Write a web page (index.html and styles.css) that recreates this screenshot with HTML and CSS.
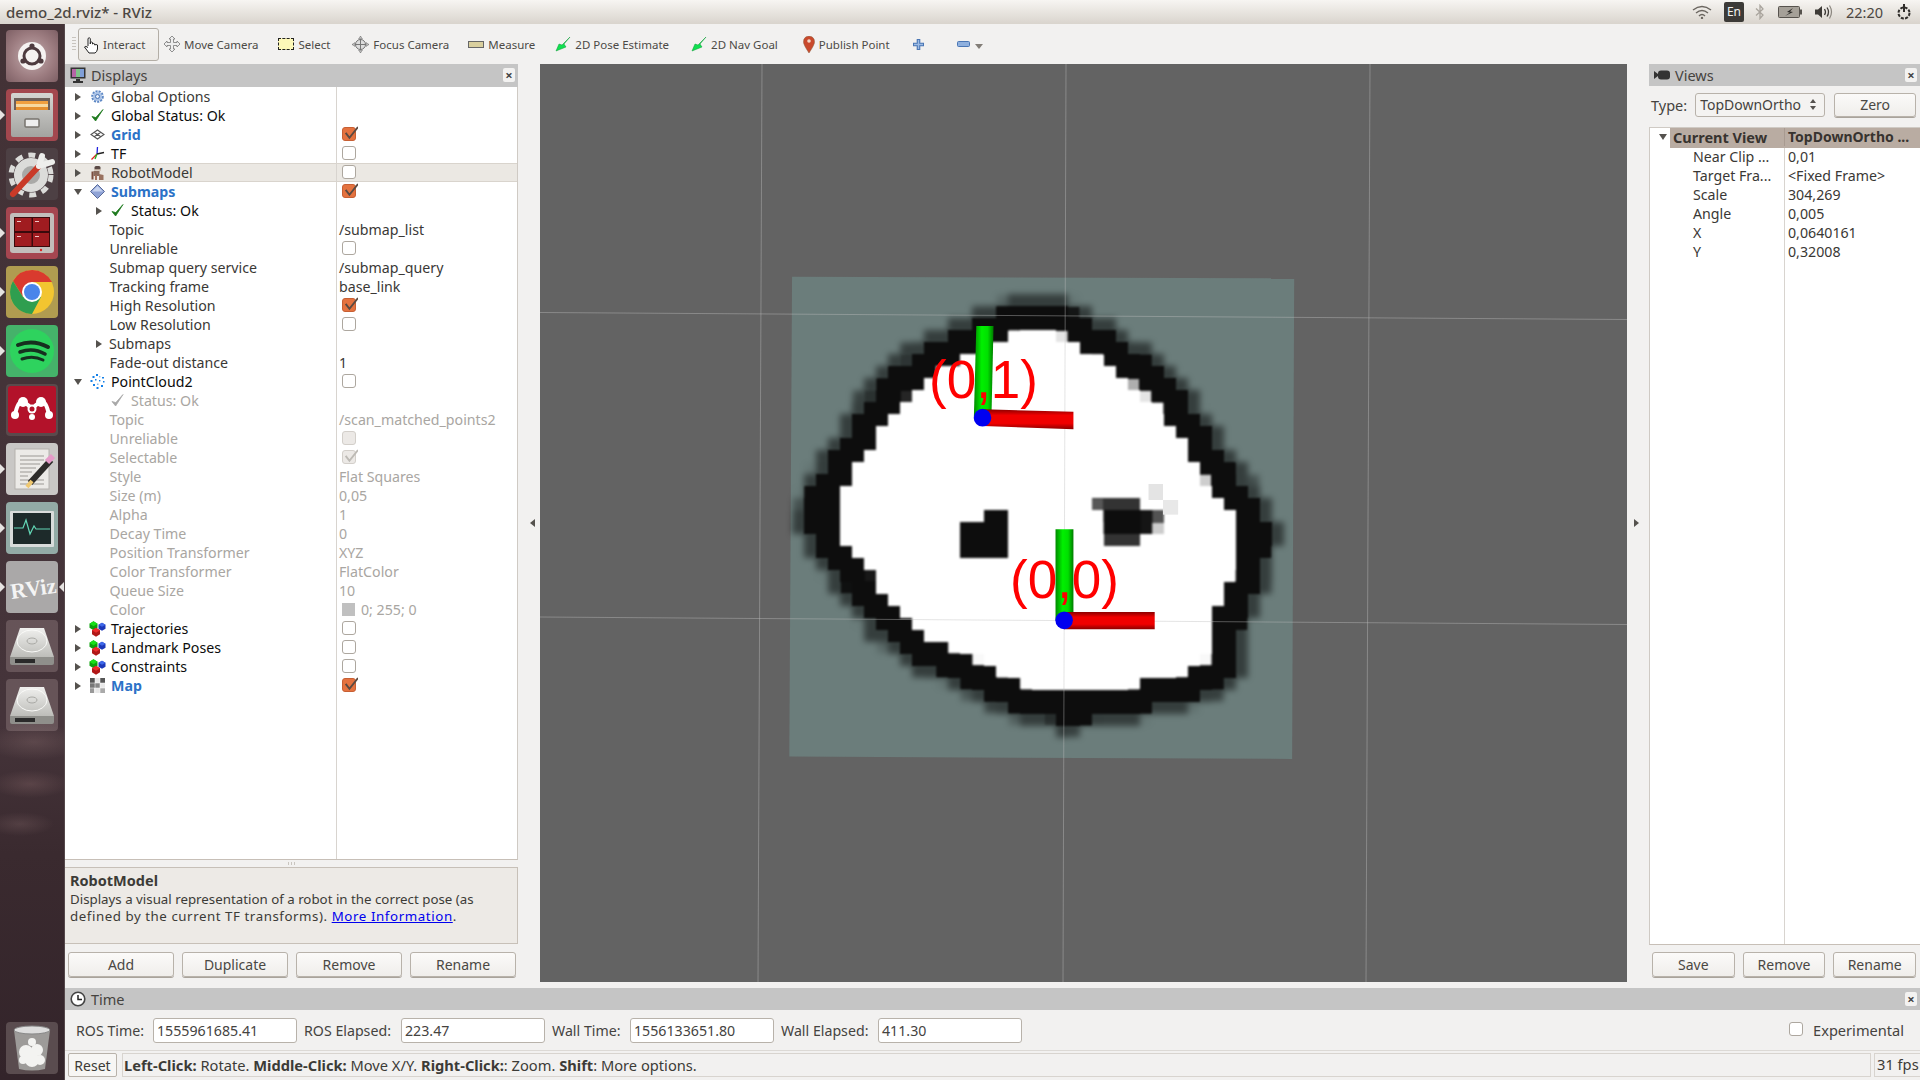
FILE: index.html
```
<!DOCTYPE html>
<html lang="en">
<head>
<meta charset="utf-8">
<title>demo_2d.rviz* - RViz</title>
<link rel="stylesheet" href="styles.css">
</head>
<body>
<svg class="defs" width="0" height="0" aria-hidden="true">
  <defs>
    <symbol id="i-gear" viewBox="0 0 15 15"><circle cx="7.5" cy="7.5" r="5" fill="none" stroke="#5b86c4" stroke-width="2.6" stroke-dasharray="2 1" /><circle cx="7.5" cy="7.5" r="4.6" fill="#a9c2e6" /><circle cx="7.5" cy="7.5" r="2" fill="#e8eef8" stroke="#4a75b5" /></symbol>
    <symbol id="i-check" viewBox="0 0 15 15"><path d="M2 8.5 L5.6 13 L13 1.5 L5.8 9.6 Z" fill="#1e7a1e" stroke="#1e7a1e" stroke-width=".8" stroke-linejoin="round"/></symbol>
    <symbol id="i-check-off" viewBox="0 0 15 15"><path d="M2 8.5 L5.6 13 L13 1.5 L5.8 9.6 Z" fill="#a8a8a8" stroke="#a8a8a8" stroke-width=".8" stroke-linejoin="round"/></symbol>
    <symbol id="i-grid" viewBox="0 0 15 15"><path d="M7.5 3 L14 7.5 L7.5 12 L1 7.5 Z M4.2 5.2 L10.8 9.8 M10.8 5.2 L4.2 9.8" fill="none" stroke="#555" stroke-width="1.1"/></symbol>
    <symbol id="i-tf" viewBox="0 0 15 15"><path d="M7 8 L7.5 1" stroke="#2323e0" stroke-width="1.3"/><path d="M7 8 L14 6.5" stroke="#222" stroke-width="1.3"/><path d="M7 8 L1.5 13.5" stroke="#e02020" stroke-width="1.3"/><path d="M7 8 L5 13" stroke="#20b020" stroke-width="1.3"/></symbol>
    <symbol id="i-robot" viewBox="0 0 15 15"><rect x="4.5" y="1" width="6" height="4" rx="1.5" fill="#5b4a46"/><rect x="4" y="4.2" width="7" height="1.4" fill="#c9b7a8"/><rect x="3.5" y="6" width="6" height="5" fill="#8a6a5c"/><rect x="1.5" y="6.5" width="2" height="8" fill="#7a4d3e"/><rect x="5" y="10" width="2" height="5" fill="#a2705c"/><path d="M9 9 L13.5 10 L13.5 15 L9 15 Z" fill="#9a7260"/></symbol>
    <symbol id="i-diamond" viewBox="0 0 15 15"><path d="M7.5 0.5 L14.5 7.5 L7.5 14.5 L0.5 7.5 Z" fill="#8fa3d6" stroke="#5a6b99"/><path d="M7.5 2 L13 7.5 L2 7.5 Z" fill="#c7d3ef"/></symbol>
    <symbol id="i-cloud" viewBox="0 0 15 15"><g fill="#1480e8"><rect x="6" y="0" width="2" height="2"/><rect x="2.5" y="2" width="2" height="2"/><rect x="9" y="2" width="1.4" height="1.4" fill="#7cb8f0"/><rect x="12" y="3" width="2" height="1.5"/><rect x="0.5" y="6" width="2" height="2"/><rect x="5" y="5" width="1.5" height="1.5"/><rect x="9" y="6" width="1.4" height="1.4"/><rect x="13" y="7" width="1.5" height="1.5"/><rect x="3" y="10" width="2" height="2"/><rect x="7" y="9.5" width="1.5" height="1.5" fill="#7cb8f0"/><rect x="11" y="11" width="2" height="2"/><rect x="6.5" y="13" width="2" height="2"/></g></symbol>
    <symbol id="i-cubes" viewBox="0 0 17 15.5"><path d="M4.5 0 L8.5 2.5 L8.5 6.5 L4.5 9 L.5 6.5 L.5 2.5 Z" fill="#0ca00c"/><path d="M4.5 0 L8.5 2.5 L4.5 5 L.5 2.5 Z" fill="#18e018"/><path d="M13 1.5 L16.5 3.5 L16.5 7.5 L13 9.5 L9.5 7.5 L9.5 3.5 Z" fill="#1c38b8"/><path d="M13 1.5 L16.5 3.5 L13 5.5 L9.5 3.5 Z" fill="#3f68ea"/><path d="M7 6.5 L11 9 L11 13 L7 15.5 L3 13 L3 9 Z" fill="#b01818"/><path d="M7 6.5 L11 9 L7 11.5 L3 9 Z" fill="#ee2c2c"/></symbol>
    <symbol id="i-map" viewBox="0 0 15 15"><rect width="15" height="15" fill="#e8e8e8"/><g fill="#555"><rect width="5" height="5"/><rect x="5" y="5" width="5" height="5" fill="#888"/><rect y="5" width="5" height="5" fill="#777"/><rect y="10" width="4" height="5" fill="#999"/><rect x="10" width="5" height="5"/><rect x="10" y="10" width="5" height="5" fill="#aaa"/></g><path d="M5 0V15M10 0V15M0 5H15M0 10H15" stroke="#fff" stroke-width=".5"/></symbol>
    <symbol id="i-tick" viewBox="0 0 14 14"><path d="M2.5 6.5 L6 11 L14 1" fill="none" stroke="#5a4a42" stroke-width="1.8"/></symbol>
    <symbol id="i-tick-off" viewBox="0 0 14 14"><path d="M2.5 6.5 L6 11 L14 1" fill="none" stroke="#bdbab5" stroke-width="1.8"/></symbol>
    <symbol id="i-arrow2d" viewBox="0 0 16 16"><path d="M1 15 L4 8 L7 9 L15 1 L9 8 L11 11 Z" fill="#10e050" stroke="#0a9a34" stroke-width=".5"/></symbol>
    <linearGradient id="g-disk" x2="0" y2="1"><stop offset="0" stop-color="#f0f0ee"/><stop offset="1" stop-color="#bdbdb9"/></linearGradient>
    <linearGradient id="g-cab" x2="0" y2="1"><stop offset="0" stop-color="#d5d5d2"/><stop offset="1" stop-color="#a3a3a0"/></linearGradient>
    <symbol id="i-disk" viewBox="0 0 52 52"><path d="M14 8 L38 8 L48 37 L4 37 Z" fill="url(#g-disk)"/><ellipse cx="26" cy="21" rx="15" ry="11" fill="none" stroke="#fafaf8"/><ellipse cx="26" cy="21" rx="5" ry="3" fill="none" stroke="#a9a9a5"/><path d="M4 37 H48 V43 Q48 45 46 45 H6 Q4 45 4 43 Z" fill="#8f8f8b"/><rect x="9" y="39" width="20" height="4" fill="#2a2a2a"/></symbol>
  </defs>
</svg>

<header class="topbar">
  <div class="win-title">demo_2d.rviz* - RViz</div>
  <div class="tray">
    <svg class="tray-wifi" viewBox="0 0 20 14" width="20" height="14"><path d="M1 5 Q10 -2 19 5 M4 8 Q10 3 16 8 M7 11 Q10 8 13 11" fill="none" stroke="#6a655f" stroke-width="1.4"/><circle cx="10" cy="13" r="1.2" fill="#6a655f"/></svg>
    <span class="tray-lang">En</span>
    <svg class="tray-bt" viewBox="0 0 10 16" width="10" height="16"><path d="M1 4.5 L8 11 L5 14.5 V1.5 L8 5 L1 11.5" fill="none" stroke="#a9a49d" stroke-width="1.3"/></svg>
    <svg class="tray-bat" viewBox="0 0 24 12" width="24" height="12"><rect x=".5" y=".5" width="21" height="11" rx="1" fill="#a5a098" stroke="#56524d"/><rect x="22" y="3.5" width="2" height="5" fill="#56524d"/><path d="M15 2 L9 6 L12 6.5 L7 10 L15 6 L12 5.5 Z" fill="#2b2926"/></svg>
    <svg class="tray-vol" viewBox="0 0 20 16" width="20" height="16"><path d="M1 5.5 H4 L8 2 V14 L4 10.500 H1 Z" fill="#3d3a36"/><path d="M10.500 5 Q12.500 8 10.500 11 M13 3.500 Q16 8 13 12.500" fill="none" stroke="#3d3a36" stroke-width="1.3"/><path d="M15.500 1.500 Q19.500 8 15.500 14.500" fill="none" stroke="#8b867f" stroke-width="1.2"/></svg>
    <span class="tray-clock">22:20</span>
    <svg class="tray-power" viewBox="0 0 16 16" width="16" height="16"><circle cx="8" cy="9" r="5.5" fill="none" stroke="#2f2c29" stroke-width="2" stroke-dasharray="3 1.300"/><path d="M8 0 V8" stroke="#2f2c29" stroke-width="2"/></svg>
  </div>
</header>

<div class="desktop">
  <nav class="launcher">
    <div class="tile t-dash"><svg viewBox="0 0 52 52"><circle cx="26" cy="26" r="14" fill="#f5f2f1"/><circle cx="26" cy="26" r="8" fill="none" stroke="#4e3b3f" stroke-width="3"/><circle cx="26" cy="16" r="2.600" fill="#4e3b3f"/><circle cx="17" cy="31" r="2.600" fill="#4e3b3f"/><circle cx="35" cy="31" r="2.600" fill="#4e3b3f"/></svg></div>
    <div class="tile t-files run"><svg viewBox="0 0 52 52"><rect x="5" y="4" width="42" height="44" rx="2" fill="url(#g-cab)"/><rect x="8" y="9" width="36" height="12" fill="#6d605a"/><rect x="10" y="12" width="32" height="3" fill="#f0a040"/><rect x="10" y="15" width="32" height="3" fill="#f7d9a0"/><rect x="10" y="18" width="32" height="3" fill="#e59030"/><rect x="19" y="30" width="14" height="8" rx="1" fill="#eee" stroke="#77736e" stroke-width="1.500"/></svg></div>
    <div class="tile t-settings"><svg viewBox="0 0 52 52"><circle cx="25" cy="27" r="20" fill="none" stroke="#dcdcda" stroke-width="5" stroke-dasharray="7 6"/><circle cx="25" cy="27" r="13" fill="#a9a9a7" stroke="#dcdcda" stroke-width="8"/><path d="M7 46 L33 18" stroke="#c93a28" stroke-width="6" stroke-linecap="round"/><path d="M33 18 L36 8 M33 18 L46 14" stroke="#eeeeec" stroke-width="6" stroke-linecap="round"/></svg></div>
    <div class="tile t-work run"><svg viewBox="0 0 52 52"><rect x="4" y="6" width="44" height="40" rx="3" fill="#c2bebb"/><rect x="8" y="10" width="36" height="30" fill="#3a0a0c"/><g fill="#a01c20"><rect x="9" y="11" width="16.500" height="13"/><rect x="27" y="11" width="16" height="13"/><rect x="9" y="26" width="16.500" height="13"/><rect x="27" y="26" width="16" height="13"/></g><g fill="#f0c8c8"><rect x="11" y="14" width="4" height="1"/><rect x="29" y="14" width="4" height="1"/><rect x="11" y="29" width="4" height="1"/><rect x="29" y="29" width="4" height="1"/></g><circle cx="35" cy="43" r="1.200" fill="#d22"/></svg></div>
    <div class="tile t-chrome run"><svg viewBox="0 0 52 52"><circle cx="26" cy="26" r="22" fill="#f2c530"/><path d="M26 4 A22 22 0 0 0 7 15 L17 31 L26 16 L46 16 A22 22 0 0 0 26 4 Z" fill="#d93a2e"/><path d="M7 15 A22 22 0 0 0 26 48 L35 31 L17 31 Z" fill="#2f9e4f"/><circle cx="26" cy="26" r="10" fill="#fff"/><circle cx="26" cy="26" r="8" fill="#4a85ea"/></svg></div>
    <div class="tile t-spotify run"><svg viewBox="0 0 52 52"><circle cx="26" cy="26" r="22" fill="#2ed35e"/><g fill="none" stroke="#16301f" stroke-linecap="round"><path d="M12 20 Q27 14 42 22" stroke-width="4"/><path d="M14 27 Q27 22 39 29" stroke-width="3.500"/><path d="M16 34 Q27 30 37 35" stroke-width="3"/></g></svg></div>
    <div class="tile t-mendeley"><svg viewBox="0 0 52 52"><rect x="2" y="2" width="48" height="47" rx="3" fill="#b3122a"/><g fill="#fff"><circle cx="26" cy="25" r="4.500"/><circle cx="17" cy="18" r="5"/><circle cx="35" cy="18" r="5"/><circle cx="9" cy="31" r="4"/><circle cx="43" cy="31" r="4"/><circle cx="26" cy="33" r="3"/></g><path d="M9 31 Q12 16 17 18 Q22 20 26 25 Q30 20 35 18 Q40 16 43 31" fill="none" stroke="#fff" stroke-width="4"/><circle cx="26" cy="25" r="2.500" fill="#b3122a"/></svg></div>
    <div class="tile t-editor run"><svg viewBox="0 0 52 52"><rect x="9" y="6" width="34" height="40" fill="#eceae7" stroke="#b5b2ae"/><g stroke="#9b9894"><path d="M14 13H38M14 17H38M14 21H34M14 25H30M14 29H26M14 33H22M14 37H38M14 41H38"/></g><path d="M24 40 L45 17" stroke="#2e2c2a" stroke-width="6"/><path d="M41 19 L47 13" stroke="#e59ac8" stroke-width="6"/><path d="M21 44 L26 38" stroke="#f0c870" stroke-width="4"/></svg></div>
    <div class="tile t-monitor run"><svg viewBox="0 0 52 52"><rect x="4" y="9" width="44" height="36" rx="1" fill="#d9dcdb"/><rect x="7" y="11" width="38" height="31" fill="#1d2a2a"/><path d="M8 26 H17 L20 18 L24 32 L28 24 L30 27 H44" fill="none" stroke="#62d6b5" stroke-width="1.200"/></svg></div>
    <div class="tile t-rviz run-both"><svg viewBox="0 0 52 52"><text class="rviz-logo" x="4" y="35" transform="rotate(-8 26 26)">RViz</text></svg></div>
    <div class="tile t-disk"><svg viewBox="0 0 52 52"><use href="#i-disk"/></svg></div>
    <div class="tile t-disk"><svg viewBox="0 0 52 52"><use href="#i-disk"/></svg></div>
    <div class="tile t-trash"><svg viewBox="0 0 52 52"><path d="M8 8 Q26 2 44 8 L39 47 Q26 50 13 47 Z" fill="#9d9b99"/><ellipse cx="26" cy="8" rx="18" ry="4" fill="#ddd" stroke="#888"/><g fill="#f3f3f1"><circle cx="20" cy="30" r="7"/><circle cx="31" cy="28" r="6"/><circle cx="26" cy="38" r="7"/><circle cx="17" cy="38" r="4"/><circle cx="34" cy="38" r="5"/><circle cx="26" cy="20" r="4"/></g></svg></div>
  </nav>

  <div class="app">
    <div class="toolbar">
      <span class="grip"></span>
      <button class="tool tool-on"><svg viewBox="0 0 16 18" width="16" height="18"><path d="M5 10 V2.500 Q6.200 1 7.300 2.500 V8 V6.500 Q8.500 5.500 9.500 6.500 V8 Q10.700 7 11.700 8 V9 Q13 8 14.500 9 V13 Q14 16 12 17 H6 L1.500 11 Q2.500 9.500 5 11.500" fill="#fff" stroke="#222" stroke-width="1"/></svg>Interact</button>
      <button class="tool t-move"><svg viewBox="0 0 16 16" width="16" height="16"><path d="M8 0 L11 3 H9.500 V6.500 H13 V5 L16 8 L13 11 V9.500 H9.500 V13 H11 L8 16 L5 13 H6.500 V9.500 H3 V11 L0 8 L3 5 V6.500 H6.500 V3 H5 Z" fill="#eee" stroke="#777" stroke-width=".8"/></svg>Move Camera</button>
      <button class="tool"><span class="sel-box"></span>Select</button>
      <button class="tool t-focus"><svg viewBox="0 0 17 17" width="17" height="17"><circle cx="8.500" cy="8.500" r="5" fill="#ddd" stroke="#777"/><path d="M8.500 0 V17 M0 8.500 H17" stroke="#777"/><path d="M8.500 0 L6.500 3 H10.500 Z M8.500 17 L6.500 14 H10.500 Z M0 8.500 L3 6.500 V10.500 Z M17 8.500 L14 6.500 V10.500 Z" fill="#bbb" stroke="#777" stroke-width=".5"/></svg>Focus Camera</button>
      <button class="tool t-measure"><span class="ruler"></span>Measure</button>
      <button class="tool"><svg viewBox="0 0 16 16" width="16" height="16"><use href="#i-arrow2d"/></svg>2D Pose Estimate</button>
      <button class="tool t-nav"><svg viewBox="0 0 16 16" width="16" height="16"><use href="#i-arrow2d"/></svg>2D Nav Goal</button>
      <button class="tool t-pub"><svg viewBox="0 0 12 17" width="12" height="17"><path d="M6 17 Q0 8 .5 5.500 A5.500 5.500 0 0 1 11.500 5.500 Q12 8 6 17 Z" fill="#c9492c" stroke="#8a5a3a" stroke-width=".5"/><circle cx="6" cy="5" r="1.800" fill="#f4d8c8"/></svg>Publish Point</button>
      <svg class="t-plus" viewBox="0 0 13 13" width="13" height="13"><path d="M6.500 1 V12 M1 6.500 H12" stroke="#4a76b4" stroke-width="3.600"/><path d="M6.500 2 V11 M2 6.500 H11" stroke="#9dbbe4" stroke-width="1.400"/></svg>
      <svg class="t-minus" viewBox="0 0 13 6" width="13" height="6"><rect x=".5" y=".5" width="12" height="5" rx="1" fill="#8fb0de" stroke="#4a76b4"/></svg>
      <span class="t-caret"></span>
    </div>

    <div class="work">
      <section class="panel displays">
        <div class="dock-title">
          <svg viewBox="0 0 16 16" width="16" height="16"><rect x=".5" y="0.500" width="15" height="11" fill="#333"/><rect x="2" y="2" width="4" height="8" fill="#b565a6"/><rect x="6" y="2" width="4" height="8" fill="#7fc48a"/><rect x="10" y="2" width="4" height="8" fill="#7f9fd8"/><rect x="6" y="12" width="4" height="2" fill="#333"/><rect x="3" y="14" width="10" height="2" fill="#333"/></svg>
          <span>Displays</span><span class="dock-x">×</span>
        </div>
        <div class="tree">
          <div class="row"><div class="name l0"><i class="tri r"></i><svg class="ico"><use href="#i-gear"/></svg>Global Options</div><div class="val"></div></div>
          <div class="row"><div class="name l0 blk"><i class="tri r"></i><svg class="ico"><use href="#i-check"/></svg>Global Status: Ok</div><div class="val"></div></div>
          <div class="row"><div class="name l0 act"><i class="tri r"></i><svg class="ico"><use href="#i-grid"/></svg>Grid</div><div class="val"><span class="cb on"><svg><use href="#i-tick"/></svg></span></div></div>
          <div class="row"><div class="name l0 blk"><i class="tri r"></i><svg class="ico"><use href="#i-tf"/></svg>TF</div><div class="val"><span class="cb"></span></div></div>
          <div class="row sel"><div class="name l0"><i class="tri r"></i><svg class="ico"><use href="#i-robot"/></svg>RobotModel</div><div class="val"><span class="cb"></span></div></div>
          <div class="row"><div class="name l0 act"><i class="tri d"></i><svg class="ico"><use href="#i-diamond"/></svg>Submaps</div><div class="val"><span class="cb on"><svg><use href="#i-tick"/></svg></span></div></div>
          <div class="row"><div class="name l1a blk"><i class="tri r"></i><svg class="ico"><use href="#i-check"/></svg>Status: Ok</div><div class="val"></div></div>
          <div class="row"><div class="name l1">Topic</div><div class="val">/submap_list</div></div>
          <div class="row"><div class="name l1">Unreliable</div><div class="val"><span class="cb"></span></div></div>
          <div class="row"><div class="name l1">Submap query service</div><div class="val">/submap_query</div></div>
          <div class="row"><div class="name l1">Tracking frame</div><div class="val">base_link</div></div>
          <div class="row"><div class="name l1">High Resolution</div><div class="val"><span class="cb on"><svg><use href="#i-tick"/></svg></span></div></div>
          <div class="row"><div class="name l1">Low Resolution</div><div class="val"><span class="cb"></span></div></div>
          <div class="row"><div class="name l1a"><i class="tri r tight"></i>Submaps</div><div class="val"></div></div>
          <div class="row"><div class="name l1">Fade-out distance</div><div class="val">1</div></div>
          <div class="row"><div class="name l0 blk"><i class="tri d"></i><svg class="ico"><use href="#i-cloud"/></svg>PointCloud2</div><div class="val"><span class="cb"></span></div></div>
          <div class="row off"><div class="name l1s"><svg class="ico"><use href="#i-check-off"/></svg>Status: Ok</div><div class="val"></div></div>
          <div class="row off"><div class="name l1">Topic</div><div class="val">/scan_matched_points2</div></div>
          <div class="row off"><div class="name l1">Unreliable</div><div class="val"><span class="cb dis"></span></div></div>
          <div class="row off"><div class="name l1">Selectable</div><div class="val"><span class="cb dis"><svg><use href="#i-tick-off"/></svg></span></div></div>
          <div class="row off"><div class="name l1">Style</div><div class="val">Flat Squares</div></div>
          <div class="row off"><div class="name l1">Size (m)</div><div class="val">0,05</div></div>
          <div class="row off"><div class="name l1">Alpha</div><div class="val">1</div></div>
          <div class="row off"><div class="name l1">Decay Time</div><div class="val">0</div></div>
          <div class="row off"><div class="name l1">Position Transformer</div><div class="val">XYZ</div></div>
          <div class="row off"><div class="name l1">Color Transformer</div><div class="val">FlatColor</div></div>
          <div class="row off"><div class="name l1">Queue Size</div><div class="val">10</div></div>
          <div class="row off"><div class="name l1">Color</div><div class="val"><span class="swatch"></span>0; 255; 0</div></div>
          <div class="row"><div class="name l0 blk"><i class="tri r"></i><svg class="ico ico-w"><use href="#i-cubes"/></svg>Trajectories</div><div class="val"><span class="cb"></span></div></div>
          <div class="row"><div class="name l0 blk"><i class="tri r"></i><svg class="ico ico-w"><use href="#i-cubes"/></svg>Landmark Poses</div><div class="val"><span class="cb"></span></div></div>
          <div class="row"><div class="name l0 blk"><i class="tri r"></i><svg class="ico ico-w"><use href="#i-cubes"/></svg>Constraints</div><div class="val"><span class="cb"></span></div></div>
          <div class="row"><div class="name l0 act"><i class="tri r"></i><svg class="ico"><use href="#i-map"/></svg>Map</div><div class="val"><span class="cb on"><svg><use href="#i-tick"/></svg></span></div></div>
          <div class="row filler"><div class="name"></div><div class="val"></div></div>
        </div>
        <div class="handle"></div>
        <div class="desc">
          <b>RobotModel</b><br>
          Displays a visual representation of a robot in the correct pose (as<br>
          <span class="line2">defined by the current TF transforms). <a href="#">More Information</a>.</span>
        </div>
        <div class="btn-row disp-btns">
          <button class="btn">Add</button><button class="btn">Duplicate</button><button class="btn">Remove</button><button class="btn">Rename</button>
        </div>
      </section>

      <div class="split"><i class="tri-l"></i></div>

      <main class="viewport">
        <svg class="scene" viewBox="540 64 1087 918" width="1087" height="918">
          <defs>
            <filter id="pixel" filterUnits="userSpaceOnUse" x="780" y="270" width="560" height="510" color-interpolation-filters="sRGB">
              <feFlood x="785" y="275" width="2" height="2"/>
              <feComposite width="12" height="12"/>
              <feTile result="dots"/>
              <feComposite in="SourceGraphic" in2="dots" operator="in"/>
              <feMorphology operator="dilate" radius="5"/>
              <feGaussianBlur stdDeviation="1.300"/>
            </filter>
            <filter id="pixelSoft" filterUnits="userSpaceOnUse" x="780" y="270" width="560" height="510" color-interpolation-filters="sRGB">
              <feFlood x="785" y="275" width="2" height="2"/>
              <feComposite width="12" height="12"/>
              <feTile result="dots"/>
              <feComposite in="SourceGraphic" in2="dots" operator="in"/>
              <feMorphology operator="dilate" radius="5"/>
              <feGaussianBlur stdDeviation="3"/>
            </filter>
            <linearGradient id="gGreen"><stop offset="0" stop-color="#008a00"/><stop offset=".4" stop-color="#00f000"/><stop offset=".7" stop-color="#00e000"/><stop offset="1" stop-color="#007a00"/></linearGradient>
            <linearGradient id="gRed" x2="0" y2="1"><stop offset="0" stop-color="#8a0000"/><stop offset=".3" stop-color="#f00000"/><stop offset=".7" stop-color="#f00000"/><stop offset="1" stop-color="#8a0000"/></linearGradient>
            <polygon id="outline" points="730,135 650,165 580,200 500,235 420,280 350,340 290,410 240,495 180,585 125,670 120,770 170,860 240,950 300,1040 400,1130 510,1180 620,1240 720,1290 830,1318 980,1300 1090,1265 1200,1240 1280,1190 1305,1040 1350,920 1385,790 1340,700 1270,610 1200,490 1130,390 1050,310 960,245 860,175 790,140"/>
          </defs>
          <g transform="translate(780 270) scale(.3444 .3333)">
            <polygon class="map-bg" points="35,20 1493,25 1487,1467 27,1460"/>
          </g>
          <g filter="url(#pixelSoft)">
            <g transform="translate(780 270) scale(.3444 .3333)">
              <use href="#outline" class="map-halo"/>
            </g>
          </g>
          <g filter="url(#pixel)">
            <g transform="translate(780 270) scale(.3444 .3333)">
              <use href="#outline" class="map-wall"/>
              <polygon class="map-blob" points="580,725 660,725 665,860 535,855 530,770 575,760"/>
              <polygon class="map-blob-soft" points="920,695 1060,695 1060,730 1100,735 1100,775 1060,780 1060,825 935,825"/>
              <polygon class="map-blob" points="925,725 1065,725 1065,780 925,780"/>
            </g>
          </g>
          <g transform="translate(780 270) scale(.3444 .3333)">
            <rect x="1070" y="642" width="42" height="48" fill="#e4e4e4"/>
            <rect x="1112" y="690" width="44" height="44" fill="#e8e8e8"/>
          </g>
          <g class="grid-lines">
            <line x1="762" y1="64" x2="758" y2="982"/>
            <line x1="1066" y1="64" x2="1063" y2="982"/>
            <line x1="1370" y1="64" x2="1366" y2="982"/>
            <line x1="540" y1="312.500" x2="1627" y2="319.500"/>
            <line x1="540" y1="617" x2="1627" y2="624.500"/>
          </g>
          <g transform="translate(780 270) scale(.3444 .3333)">
            <polygon fill="url(#gGreen)" points="570,168 620,168 614,440 563,440"/>
            <polygon fill="url(#gGreen)" points="800,778 852,778 852,1050 800,1050"/>
            <polygon fill="url(#gRed)" points="590,418 852,425 852,478 590,468"/>
            <polygon fill="url(#gRed)" points="825,1026 1088,1026 1088,1078 825,1078"/>
            <ellipse cx="588" cy="443" rx="25.500" ry="26.500" fill="#0000f0"/>
            <ellipse cx="825" cy="1051" rx="25.500" ry="26.500" fill="#0000f0"/>
          </g>
          <text class="marker" x="929" y="398">(0,1)</text>
          <text class="marker" x="1010" y="598">(0,0)</text>
        </svg>
      </main>

      <div class="split right"><i class="tri-r"></i></div>

      <aside class="panel views">
        <div class="dock-title">
          <svg viewBox="0 0 16 10" width="16" height="10"><path d="M0 1 L4 4 V6 L0 9 Z" fill="#333"/><rect x="4" y="0.500" width="12" height="9" rx="3" fill="#333"/></svg>
          <span>Views</span><span class="dock-x">×</span>
        </div>
        <div class="type-row">
          <label>Type:</label>
          <div class="combo">TopDownOrtho<span class="spin"><i></i><i></i></span></div>
          <button class="btn zero">Zero</button>
        </div>
        <div class="vtree">
          <div class="vhead"><i class="tri d"></i><div class="vn">Current View</div><div class="vv">TopDownOrtho ...</div></div>
          <div class="vrow"><div class="vn">Near Clip ...</div><div class="vv">0,01</div></div>
          <div class="vrow"><div class="vn">Target Fra...</div><div class="vv">&lt;Fixed Frame&gt;</div></div>
          <div class="vrow"><div class="vn">Scale</div><div class="vv">304,269</div></div>
          <div class="vrow"><div class="vn">Angle</div><div class="vv">0,005</div></div>
          <div class="vrow"><div class="vn">X</div><div class="vv">0,0640161</div></div>
          <div class="vrow"><div class="vn">Y</div><div class="vv">0,32008</div></div>
          <div class="vrow vfill"><div class="vn"></div><div class="vv"></div></div>
        </div>
        <div class="btn-row view-btns">
          <button class="btn">Save</button><button class="btn">Remove</button><button class="btn">Rename</button>
        </div>
      </aside>
    </div>

    <section class="time">
      <div class="dock-title">
        <svg viewBox="0 0 16 16" width="16" height="16"><circle cx="8" cy="8" r="6.800" fill="#fff" stroke="#444" stroke-width="1.600"/><path d="M8 4 V8.500 H12" fill="none" stroke="#222" stroke-width="1.500"/></svg>
        <span>Time</span><span class="dock-x">×</span>
      </div>
      <div class="time-row">
        <label>ROS Time:</label><div class="field">1555961685.41</div>
        <label class="pad">ROS Elapsed:</label><div class="field">223.47</div>
        <label class="pad">Wall Time:</label><div class="field">1556133651.80</div>
        <label class="pad">Wall Elapsed:</label><div class="field">411.30</div>
        <div class="exp"><span class="cb"></span>Experimental</div>
      </div>
    </section>

    <footer class="status">
      <button class="reset">Reset</button>
      <div class="hint"><b>Left-Click:</b> Rotate. <b>Middle-Click:</b> Move X/Y. <b>Right-Click:</b>: Zoom. <b>Shift</b>: More options.</div>
      <div class="fps">31 fps</div>
    </footer>
  </div>
</div>
</body>
</html>
```

FILE: styles.css
```
* { box-sizing: border-box; }
html, body { margin: 0; height: 1080px; width: 1920px; overflow: hidden; }
body { font-family: "Noto Sans", "Open Sans", sans-serif; font-size: 14.200px; color: #3c3b37; background: #f2f1f0; }
.defs { position: absolute; }
button { font: inherit; color: inherit; }

.topbar { height: 24px; display: flex; align-items: center; justify-content: space-between; background: linear-gradient(#f7f5f2, #d9d4cd); color: #4c4742; }
.win-title { padding-left: 6px; font-size: 15px; font-weight: 500; }
.tray { display: flex; align-items: center; }
.tray-wifi { margin-right: 12px; }
.tray-lang { width: 20px; height: 20px; margin-right: 11px; background: #3c3a37; color: #f2f1f0; border-radius: 2px; font-size: 12px; text-align: center; line-height: 20px; }
.tray-bt { margin-right: 13px; }
.tray-bat { margin-right: 12px; }
.tray-vol { margin-right: 12px; }
.tray-clock { font-size: 14.500px; margin-right: 13px; }
.tray-power { margin-right: 8px; }

.desktop { display: flex; height: 1056px; }
.launcher { width: 65px; flex: none; padding: 6px 0 6px 6px; display: flex; flex-direction: column; gap: 7px;
  background:
    radial-gradient(ellipse 40px 14px at 30px 760px, rgba(150,115,115,.3), transparent),
    radial-gradient(ellipse 34px 12px at 20px 800px, rgba(150,120,120,.25), transparent),
    radial-gradient(ellipse 50px 18px at 34px 718px, rgba(150,120,120,.3), transparent),
    linear-gradient(#433236 0, #45343a 700px, #3a2a2f 830px, #33242a 1056px);
  border-right: 1px solid #55484b; }
.tile { width: 52px; height: 52px; border-radius: 4px; position: relative; flex: none; }
.tile > svg { width: 52px; height: 52px; display: block; }
.run::before, .run-both::before { content: ""; position: absolute; left: -6px; top: 21px; border: 5px solid transparent; border-left-color: #e6e3e1; border-right-width: 0; }
.run-both::after { content: ""; position: absolute; right: -6px; top: 21px; border: 5px solid transparent; border-right-color: #e6e3e1; border-left-width: 0; }
.t-dash { background: radial-gradient(circle at 50% 50%, #c6aeb0 0, #9c7c80 60%, #7d5f64 100%); }
.t-files { background: #a3474e; }
.t-settings { background: #4d4044; }
.t-work { background: #a54650; }
.t-chrome { background: #b09c50; }
.t-spotify { background: #45b26a; }
.t-mendeley { background: #5a4a4c; }
.t-editor { background: #c9c7c5; }
.t-monitor { background: #93aba6; }
.t-rviz { background: #aaa8a8; }
.t-disk { background: rgba(190,170,170,.28); }
.t-trash { background: #5a4c4f; margin-top: auto; }
.rviz-logo { font-family: "Liberation Serif", serif; font-size: 22px; font-weight: 700; fill: #f4f4f4; }

.app { flex: 1; min-width: 0; display: flex; flex-direction: column; background: #f2f1f0; }

.toolbar { height: 40px; display: flex; align-items: center; padding-left: 7px; flex: none; }
.grip { width: 4px; height: 14px; margin-right: 2px; background: repeating-linear-gradient(#c8c4be 0 1px, transparent 1px 3px); }
.tool { height: 32px; border: 0; background: none; display: flex; align-items: center; gap: 4px; padding: 0; margin-left: 20px; font-size: 11.500px; white-space: nowrap; color: #4c4a46; }
.tool-on { width: 81px; height: 33px; margin-top: 1px; margin-left: 0; background: linear-gradient(#f4f3f1, #ece9e5); border: 1px solid #b3aea6; border-radius: 3px; padding-left: 4px; }
.t-move { margin-left: 5px; }
.t-focus { margin-left: 22px; }
.t-measure { margin-left: 19px; }
.t-nav { margin-left: 22px; }
.t-pub { margin-left: 25px; }
.sel-box { width: 16px; height: 12px; background: #fdf8b8; border: 1px dashed #222; }
.ruler { width: 16px; height: 7px; background: #d9cf9e; border: 1px solid #666; }
.t-plus { margin-left: 22px; }
.t-minus { margin-left: 32px; }
.t-caret { margin-left: 5px; margin-top: 5px; border: 4px solid transparent; border-top: 5px solid #827d77; border-bottom: 0; }

.work { height: 918px; flex: none; display: flex; }
.panel { display: flex; flex-direction: column; height: 918px; }
.displays { width: 453px; flex: none; }
.views { width: 271px; flex: none; }
.dock-title { height: 23px; flex: none; background: #c5c5c5; display: flex; align-items: center; gap: 5px; padding: 0 0 1px 5px; color: #45433f; font-size: 14.500px; }
.views .dock-title { height: 22px; }
.dock-x { margin-left: auto; margin-right: 3px; width: 12px; height: 14px; background: #f3f2f1; border-radius: 2px; font-size: 13px; line-height: 14px; text-align: center; font-weight: 700; color: #444; }

.tree { flex: 1; min-height: 0; background: #fff; display: flex; flex-direction: column; border-bottom: 1px solid #c7bfb7; border-right: 1px solid #cfcac4; }
.row { height: 19.030px; flex: none; display: flex; align-items: stretch; color: #3a3835; }
.name { width: 272px; flex: none; display: flex; align-items: center; border-right: 1px solid #d8d4cf; white-space: nowrap; }
.val { flex: 1; display: flex; align-items: center; padding-left: 2px; white-space: nowrap; }
.l0 { padding-left: 9px; }
.l1 { padding-left: 44.500px; }
.l1a { padding-left: 30px; }
.l1s { padding-left: 45px; }
.blk { color: #0c0c0c; }
.act { color: #2c72c7; font-weight: 700; }
.off { color: #a9a6a2; }
.sel { background: #ebe8e3; box-shadow: inset 0 1px #d9d4cd, inset 0 -1px #d9d4cd; }
.filler { flex: 1; }
.ico { width: 15px; height: 15px; margin-right: 6px; flex: none; }
.ico-w { width: 17px; height: 16px; margin-left: -1px; margin-right: 5px; }
.tri { display: block; flex: none; width: 8px; margin-right: 8px; }
.tri::before { content: ""; display: block; }
.tri.r::before { margin-left: 1px; border: 4px solid transparent; border-left: 6px solid #55524e; border-right: 0; }
.tri.d::before { border: 4px solid transparent; border-top: 6px solid #55524e; border-bottom: 0; }
.l1a .tri { margin-right: 7px; }
.l1a .tri.tight { margin-right: 6px; }
.cb { width: 14px; height: 14px; margin: 0 0 2px 3px; flex: none; border: 1px solid #ada79f; border-radius: 3px; background: #fff; display: block; position: relative; }
.cb svg { position: absolute; left: 0; top: -2px; width: 15px; height: 15px; overflow: visible; }
.cb.on { background: #e4723f; border-color: #c75f33; }
.cb.dis { background: #ece9e6; border-color: #d3cfca; }
.swatch { width: 13px; height: 13px; background: #c0c0c0; margin: 0 6px 0 3px; }

.handle { height: 7px; flex: none; background: linear-gradient(90deg, transparent 223px, #c9c5bf 223px 224px, transparent 224px 226px, #c9c5bf 226px 227px, transparent 227px 229px, #c9c5bf 229px 230px, transparent 230px); background-size: 100% 3px; background-repeat: no-repeat; background-position: 0 2px; }
.desc { height: 77px; flex: none; background: #edeae6; border: 1px solid #c7c0b8; border-left: 0; padding: 4px 5px 0 5px; font-size: 13.300px; line-height: 17.500px; color: #3c3b37; }
.desc b { font-weight: 700; font-size: 14.500px; }
.desc a { color: #0000ee; letter-spacing: .6px; }
.line2 { letter-spacing: .55px; }
.btn-row { display: flex; flex: none; }
.disp-btns { gap: 8px; padding: 8px 0 5px 3px; }
.disp-btns .btn { width: 106px; }
.btn { height: 25px; border: 1px solid #b8b2aa; border-radius: 3px; background: linear-gradient(#fbfaf9, #f0eeeb); box-shadow: 0 1px 0 #a9a39b; padding: 0; font-size: 14px; color: #4a4844; }

.split { width: 22px; flex: none; display: flex; align-items: center; }
.tri-l { margin-left: 12px; margin-top: 0; border: 4px solid transparent; border-right: 5px solid #55524e; border-left: 0; }
.tri-r { margin-left: 7px; border: 4px solid transparent; border-left: 5px solid #55524e; border-right: 0; }
.viewport { width: 1087px; height: 918px; flex: none; background: #636363; overflow: hidden; }
.scene { display: block; }
.map-bg { fill: #6b7d7b; }
.map-wall { fill: #fff; stroke: #0d0d0d; stroke-width: 80; stroke-linejoin: round; }
.map-halo { fill: none; stroke: rgba(0,0,0,.5); stroke-width: 140; stroke-linejoin: round; }
.map-blob { fill: #0d0d0d; }
.map-blob-soft { fill: #333; }
.grid-lines line { stroke: rgba(190,190,190,.42); stroke-width: 1; }
.marker { font-family: "Liberation Sans", sans-serif; font-size: 53px; fill: #f00; }

.type-row { height: 42px; flex: none; display: flex; align-items: center; font-size: 14.500px; padding: 0 0 5px 2px; color: #45433f; }
.combo { width: 130px; height: 24px; margin-left: 8px; border: 1px solid #b8b2aa; border-radius: 3px; background: #f4f3f1; display: flex; align-items: center; padding-left: 4px; font-size: 14px; }
.spin { margin-left: auto; margin-right: 8px; display: flex; flex-direction: column; gap: 3px; }
.spin i { display: block; border: 3px solid transparent; border-bottom: 4px solid #55524e; border-top: 0; }
.spin i + i { border-top: 4px solid #55524e; border-bottom: 0; }
.zero { width: 82px; margin-left: 9px; height: 24px; }
.vtree { flex: 1; min-height: 0; background: #fff; border: 1px solid #cfcac4; border-bottom: 1px solid #c7bfb7; border-right: 0; display: flex; flex-direction: column; margin-top: -1px; }
.vhead { height: 20px; flex: none; display: flex; align-items: center; font-weight: 700; font-size: 14.500px; color: #37332f; background: linear-gradient(90deg, #fff 20px, #b9aca2 20px); padding: 0 0 2px 9px; }
.vhead .tri { margin-right: 3px; width: 8px; }
.vhead .vn { width: 114px; padding-left: 3px; }
.vhead .vv { border-left-color: #a89a90; line-height: 17px; font-size: 14px; }
.vrow { height: 19.030px; flex: none; display: flex; align-items: center; color: #3a3835; padding-left: 43px; }
.vrow .vn { width: 91px; white-space: nowrap; height: 100%; line-height: 17px; }
.vv { padding-left: 3px; white-space: nowrap; border-left: 1px solid #d8d4cf; height: 100%; line-height: 17px; flex: 1; }
.vfill { flex: 1; }
.view-btns { gap: 8px; padding: 7px 4px 5px 3px; }
.view-btns .btn { flex: 1; }

.time { margin-top: 6px; flex: none; }
.time .dock-title { height: 22px; }
.time-row { height: 40px; display: grid; grid-template-columns: 77px 144px 104px 144px 85px 144px 104px 144px 1fr; align-items: center; padding-left: 11px; font-size: 14.200px; color: #45433f; }
.time-row .pad { padding-left: 7px; }
.field { height: 25px; border: 1px solid #b8b2aa; border-radius: 3px; background: #fff; padding-left: 3px; line-height: 23px; }
.exp { display: flex; align-items: center; justify-content: flex-end; gap: 10px; padding-right: 16px; font-size: 14.600px; }
.exp .cb { width: 14px; height: 14px; }

.status { height: 30px; flex: none; display: flex; align-items: stretch; border-top: 1px solid #dcd9d5; padding: 2px 0 3px 3px; font-size: 14.660px; color: #3c3b37; }
.reset { width: 49px; height: 24px; border: 1px solid #b8b2aa; border-radius: 2px; background: #f7f6f4; padding: 0; margin-right: 5px; font-size: 14px; }
.hint { flex: 1; border: 1px solid #d8d4cf; padding-left: 1px; line-height: 22px; white-space: nowrap; }
.hint b { font-weight: 700; }
.fps { width: 46px; margin-left: 3px; border: 1px solid #d8d4cf; border-right: 0; padding-left: 2px; line-height: 20px; white-space: nowrap; overflow: hidden; }
```
